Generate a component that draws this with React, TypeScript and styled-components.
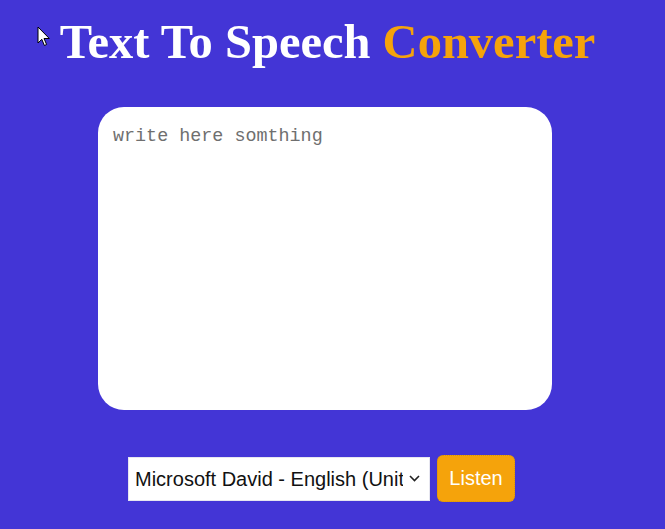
import React from "react";
import styled, { createGlobalStyle } from "styled-components";

const Global = createGlobalStyle`
  html, body { margin: 0; padding: 0; background: #4335d6; }
  body { min-height: 529px; font-family: "Liberation Sans", Arial, sans-serif; }
`;

const Page = styled.main`
  position: relative;
  width: 650px;
  display: flex;
  flex-direction: column;
  align-items: center;
`;

const Cursor = styled.svg`
  position: absolute;
  left: 37px;
  top: 26px;
  width: 15px;
  height: 22px;
  pointer-events: none;
`;

const Title = styled.h1`
  margin: 14px 0 0 5px;
  font-family: "Liberation Serif", "Times New Roman", serif;
  font-weight: bold;
  font-size: 48.5px;
  line-height: 56px;
  color: #ffffff;
  white-space: nowrap;
`;

const Accent = styled.span`
  color: #f5a30b;
`;

const TextBox = styled.textarea`
  margin-top: 37px;
  box-sizing: border-box;
  width: 454px;
  height: 303px;
  border: none;
  border-radius: 26px;
  padding: 19px 15px 14px;
  font-family: "Liberation Mono", "DejaVu Sans Mono", monospace;
  font-size: 18.4px;
  color: #222;
  background: #fff;
  resize: none;
  outline: none;
  &::placeholder { color: #6f6f6f; }
`;

const Controls = styled.div`
  margin-top: 45px;
  margin-left: -7px;
  display: flex;
  align-items: center;
  gap: 7px;
`;

const SelectWrap = styled.div`
  position: relative;
  display: flex;
`;

const VoiceSelect = styled.select`
  appearance: none;
  -webkit-appearance: none;
  box-sizing: border-box;
  width: 302px;
  height: 44px;
  border: 1px solid #e6e6f0;
  border-radius: 0;
  padding: 0 26px 0 6px;
  background: #fff;
  color: #111;
  font-family: "Liberation Sans", Arial, sans-serif;
  font-size: 20px;
  outline: none;
`;

const Chevron = styled.svg`
  position: absolute;
  right: 10px;
  top: 18px;
  width: 11px;
  height: 7px;
  pointer-events: none;
`;

const ListenButton = styled.button`
  box-sizing: border-box;
  width: 78px;
  height: 47px;
  border: 1px dotted #d89208;
  border-radius: 6px;
  background: #f5a30b;
  color: #fff;
  font-family: "Liberation Sans", Arial, sans-serif;
  font-size: 20px;
  cursor: pointer;
`;

export default function App() {
  return (
    <>
      <Global />
      <Page>
        <Cursor viewBox="0 0 15 22">
          <path
            d="M1 1 L1 17 L4.8 13.3 L7.4 19.5 L9.6 18.5 L7 12.5 L12.3 12.5 Z"
            fill="#ffffff"
            stroke="#000000"
            strokeWidth="1"
            strokeLinejoin="round"
          />
        </Cursor>
        <Title>
          Text To Speech <Accent>Converter</Accent>
        </Title>
        <TextBox placeholder="write here somthing" />
        <Controls>
          <SelectWrap>
            <VoiceSelect defaultValue="david">
              <option value="david">Microsoft David - English (United States)</option>
              <option value="zira">Microsoft Zira - English (United States)</option>
            </VoiceSelect>
            <Chevron viewBox="0 0 11 7">
              <path d="M1 1 L5.5 5.5 L10 1" fill="none" stroke="#222" strokeWidth="1.6" />
            </Chevron>
          </SelectWrap>
          <ListenButton>Listen</ListenButton>
        </Controls>
      </Page>
    </>
  );
}
